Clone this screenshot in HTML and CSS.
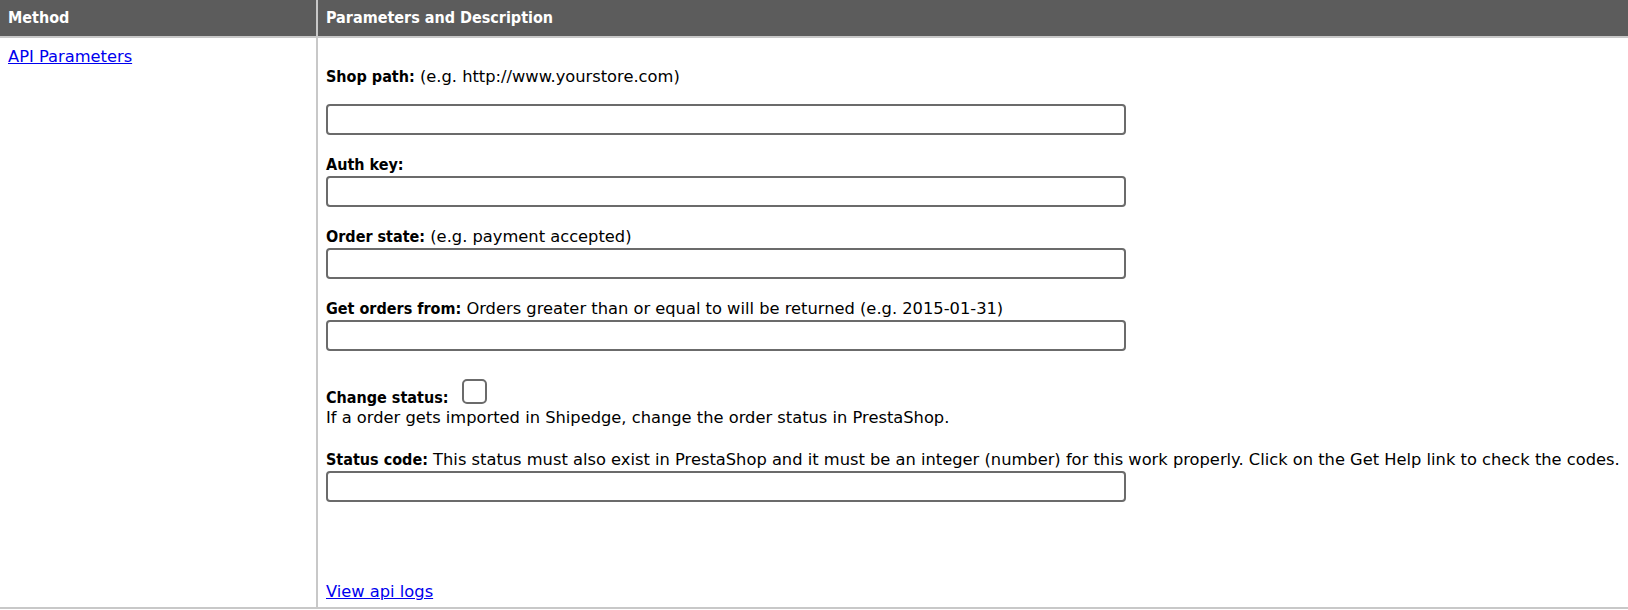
FILE: index.html
```html
<!DOCTYPE html>
<html lang="en">
<head>
    <meta charset="UTF-8">
    <meta name="viewport" content="width=device-width, initial-scale=1.0">
    <title>PrestaShop API Parameters</title>
    <link rel="stylesheet" href="styles.css">
</head>
<body>

    <table class="api-table">
        <thead>
            <tr>
                <th class="col-method">Method</th>
                <th>Parameters and Description</th>
            </tr>
        </thead>
        <tbody>
            <tr>
                <td class="col-method"><a href="#">API Parameters</a></td>
                <td class="params">
                    <!-- Shop path -->
                    <div class="field field-first">
                        <div class="field-label"><b>Shop path:</b> (e.g. http://www.yourstore.com)</div>
                        <input type="text" class="text-input text-input-spaced" name="shop_path">
                    </div>

                    <!-- Auth key -->
                    <div class="field">
                        <div class="field-label"><b>Auth key:</b></div>
                        <input type="text" class="text-input" name="auth_key">
                    </div>

                    <!-- Order state -->
                    <div class="field">
                        <div class="field-label"><b>Order state:</b> (e.g. payment accepted)</div>
                        <input type="text" class="text-input" name="order_state">
                    </div>

                    <!-- Get orders from -->
                    <div class="field">
                        <div class="field-label"><b>Get orders from:</b> Orders greater than or equal to will be returned (e.g. 2015-01-31)</div>
                        <input type="text" class="text-input" name="orders_from">
                    </div>

                    <!-- Change status -->
                    <div class="field field-check">
                        <div class="field-label"><b>Change status:</b> <input type="checkbox" class="check-input" name="change_status"></div>
                        <div class="field-label">If a order gets imported in Shipedge, change the order status in PrestaShop.</div>
                    </div>

                    <!-- Status code -->
                    <div class="field field-status">
                        <div class="field-label"><b>Status code:</b> This status must also exist in PrestaShop and it must be an integer (number) for this work properly. Click on the Get Help link to check the codes.</div>
                        <input type="text" class="text-input" name="status_code">
                    </div>

                    <div class="logs-link"><a href="#">View api logs</a></div>
                </td>
            </tr>
        </tbody>
    </table>

</body>
</html>
```

FILE: styles.css
```css
html, body {
    overflow-x: hidden;
}

body {
    margin: 0;
    padding: 0;
    font-family: 'DejaVu Sans', Verdana, sans-serif;
    font-size: 16.3px;
    line-height: 20px;
    color: #000;
    background-color: #fff;
}

/* bold labels are narrower than the body text */
b, th {
    font-family: 'DejaVu Sans Condensed', 'DejaVu Sans', sans-serif;
    font-stretch: semi-condensed;
    font-size: 16px;
    font-weight: bold;
}

a {
    color: #0000ee;
    text-decoration: underline;
}

/* Table */
.api-table {
    width: 100%;
    border-collapse: separate;
    border-spacing: 0;
}

.api-table th,
.api-table td {
    text-align: left;
    vertical-align: top;
    border-bottom: 2px solid #c8c8c8;
}

.api-table th {
    background-color: #5c5c5c;
    color: #fff;
    padding: 8px 8px;
    white-space: nowrap;
}

.api-table td {
    padding: 9px 8px 5px;
}

.col-method {
    width: 300px;
    border-right: 2px solid #c8c8c8;
}

/* Form fields */
.field {
    margin-top: 20px;
}

.field-first {
    margin-top: 20px;
}

.field-label {
    white-space: nowrap;
}

.text-input {
    display: block;
    width: 800px;
    height: 31px;
    margin: 1px 0 0;
    padding: 0 6px;
    box-sizing: border-box;
    border: 2px solid #6b6b6b;
    border-radius: 4px;
    font: inherit;
    background: #fff;
}

.text-input-spaced {
    margin-top: 17px;
}

.field-check {
    margin-top: 28px;
}

.check-input {
    -webkit-appearance: none;
    appearance: none;
    display: inline-block;
    width: 25px;
    height: 25px;
    margin: 0 0 -1px 8px;
    box-sizing: border-box;
    border: 2px solid #6b6b6b;
    border-radius: 5px;
    background: #fff;
    vertical-align: baseline;
}

.field-status {
    margin-top: 22px;
}

.logs-link {
    margin-top: 80px;
}
```
